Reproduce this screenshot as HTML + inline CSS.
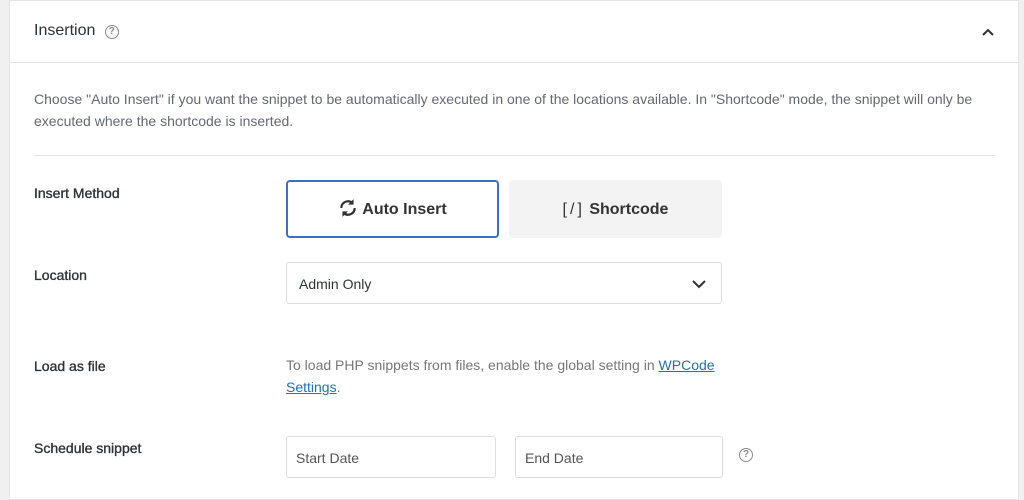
<!DOCTYPE html>
<html><head><meta charset="utf-8"><style>
*{box-sizing:border-box;margin:0;padding:0}
body{width:1024px;height:495px;overflow:hidden;background:#f0f0f1;font-family:"Liberation Sans",sans-serif;color:#3c434a;position:relative}
.panel{position:absolute;left:9px;top:0px;width:1010px;height:500px;background:#fff;border:1px solid #e2e4e7}
.abs{position:absolute}
.hdr{left:0;top:0;width:100%;height:62px;border-bottom:1px solid #e2e4e7}
.lbl{font-size:14px;color:#2c3338;font-weight:normal;-webkit-text-stroke:0.35px #2c3338}
.box{border:1px solid #dcdcde;border-radius:3px;background:#fff}
.q{display:inline-block;width:14px;height:14px;border:1.3px solid #888;border-radius:50%;font-size:10px;line-height:12px;text-align:center;color:#888;font-weight:bold}
</style></head><body>
<div class="panel">
 <div class="abs hdr"></div>
 <div class="abs" style="left:24px;top:21px;font-size:16px;color:#2c3338">Insertion <span class="q" style="margin-left:5px;vertical-align:1px">?</span></div>
 <svg class="abs" style="left:972px;top:27px" width="12" height="8" viewBox="0 0 12 8"><path d="M1 7 L6 2 L11 7" fill="none" stroke="#333" stroke-width="2"/></svg>
 <div class="abs" style="left:24px;top:87px;width:960px;font-size:14px;line-height:22px;color:#646970">Choose "Auto Insert" if you want the snippet to be automatically executed in one of the locations available. In "Shortcode" mode, the snippet will only be executed where the shortcode is inserted.</div>
 <div class="abs" style="left:24px;top:154px;width:961px;height:1px;background:#e2e4e7"></div>
 <div class="abs lbl" style="left:24px;top:184px">Insert Method</div>
 <div class="abs" style="left:276px;top:179px;width:213px;height:58px;border:2px solid #3871c8;border-radius:4px;font-size:16px;font-weight:bold;color:#333;text-align:center;line-height:56px">
  <svg width="20" height="20" viewBox="0 0 18 18" style="vertical-align:-4px;margin-right:4px"><path d="M3 9a6 6 0 0 1 10-4.5M15 9a6 6 0 0 1-10 4.5" fill="none" stroke="#333" stroke-width="2"/><path d="M14 1v5h-5zM4 17v-5h5z" fill="#333"/></svg>Auto Insert</div>
 <div class="abs" style="left:499px;top:179px;width:213px;height:58px;background:#f3f3f3;border-radius:4px;font-size:16px;font-weight:bold;color:#333;text-align:center;line-height:60px"><span style="font-weight:normal;letter-spacing:3px">[/]</span> Shortcode</div>
 <div class="abs lbl" style="left:24px;top:266px">Location</div>
 <div class="abs box" style="left:276px;top:261px;width:436px;height:42px;font-size:14px;line-height:42px;padding-left:12px;color:#2c3338">Admin Only
  <svg class="abs" style="right:15px;top:17px" width="14" height="9" viewBox="0 0 14 9"><path d="M1 1 L7 7 L13 1" fill="none" stroke="#333" stroke-width="2"/></svg></div>
 <div class="abs lbl" style="left:24px;top:357px">Load as file</div>
 <div class="abs" style="left:276px;top:353px;width:450px;font-size:14px;line-height:22px;color:#777">To load PHP snippets from files, enable the global setting in <a style="color:#2271b1;text-decoration:underline">WPCode Settings</a>.</div>
 <div class="abs lbl" style="left:24px;top:439px">Schedule snippet</div>
 <div class="abs box" style="left:276px;top:435px;width:210px;height:42px;font-size:14px;line-height:42px;padding-left:9px;color:#555">Start Date</div>
 <div class="abs box" style="left:505px;top:435px;width:208px;height:42px;font-size:14px;line-height:42px;padding-left:9px;color:#555">End Date</div>
 <span class="abs q" style="left:729px;top:447px">?</span>
</div>
</body></html>
